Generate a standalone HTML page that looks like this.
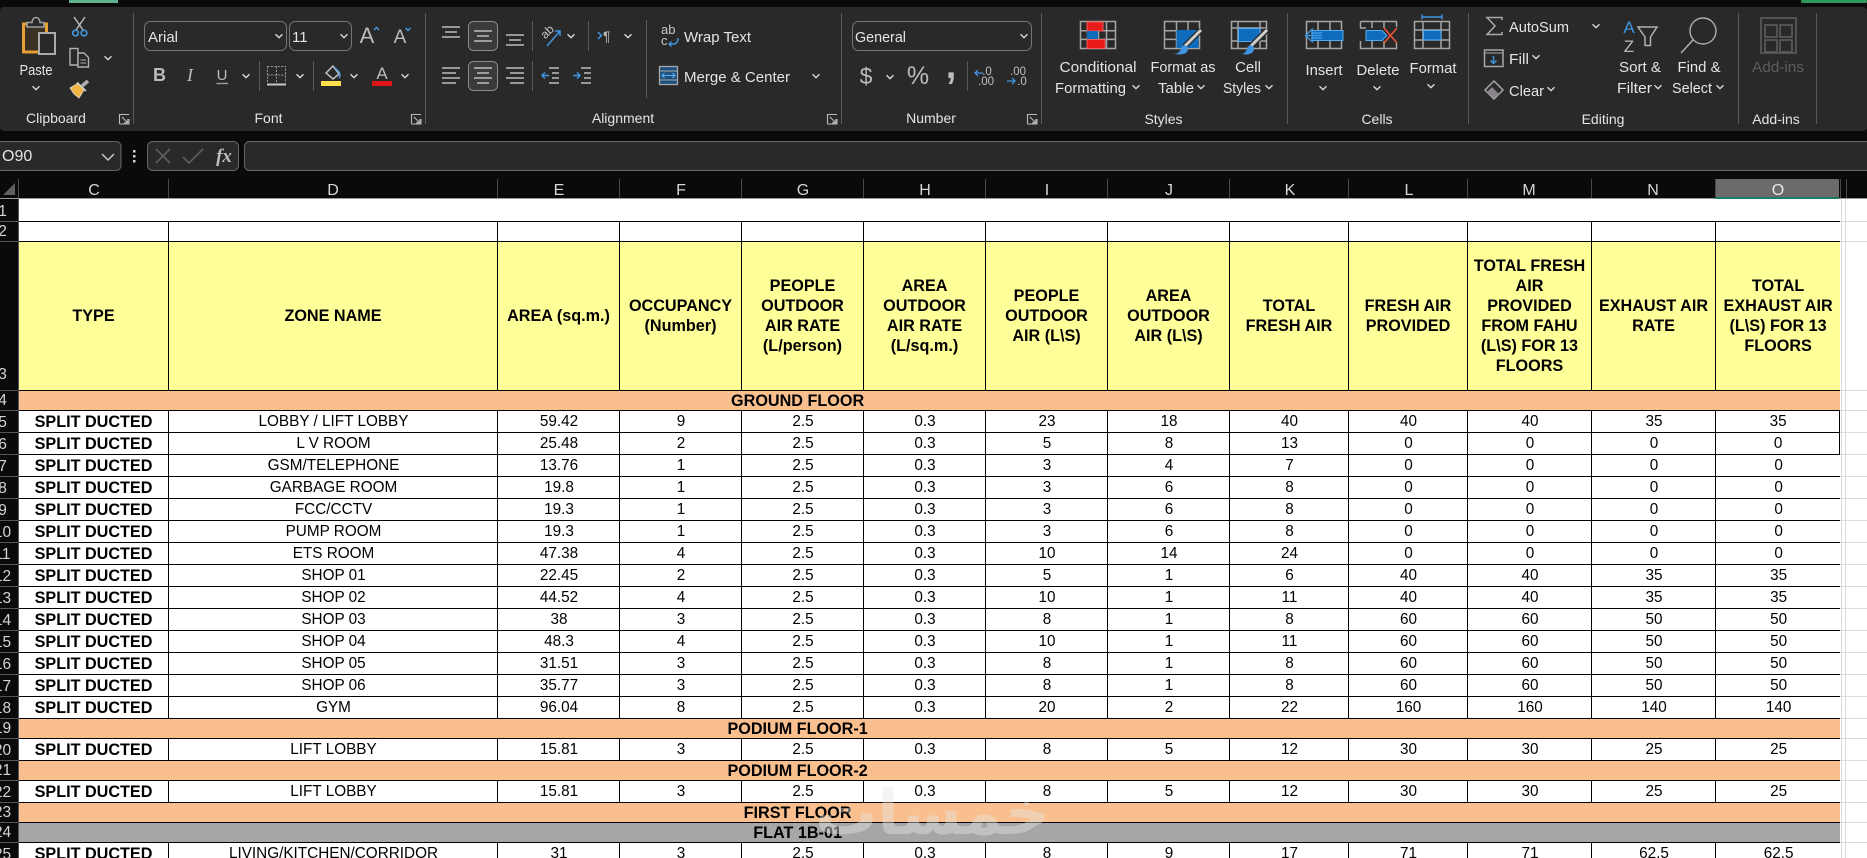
<!DOCTYPE html>
<html><head><meta charset="utf-8"><title>Sheet</title>
<style>
html,body{margin:0;padding:0;width:1867px;height:858px;overflow:hidden;background:#fff}
body{position:relative;font-family:"Liberation Sans",Arial,sans-serif}
#top{position:absolute;left:0;top:0}
#top text{font-family:"Liberation Sans",Arial,sans-serif;fill:#e4e4e4;font-size:15px}
#tb{position:absolute;left:0;top:199px;border-collapse:separate;border-spacing:0;table-layout:fixed;width:1867px;color:#000;font-size:15.3px}
#tb td{box-sizing:border-box;padding:1px 0 0 1px;text-align:center;vertical-align:middle;border-right:1px solid #000;border-bottom:1px solid #000;white-space:nowrap;line-height:20px;overflow:visible}
#tb td.r{padding:0;background:#0a0a0a;color:#d4d4d4;border-right:1px solid #555;border-bottom:1px solid #555;vertical-align:bottom;font-size:15.5px;line-height:18px;overflow:visible}
#tb td.r span{display:inline-block;width:48px;margin-left:-22px;margin-right:-9px;text-align:center}
#tb td.p{border-right:none;border-bottom:1px solid #d9d9d9}
#tb td.o{border-right:none}
#tb tr.y td.h{padding:0;background:#ffff99;font-weight:bold;font-size:16.2px;line-height:20px}
#tb td.t{padding-left:0;font-weight:bold;font-size:16.2px}
#tb td.n{border-right:none}
#tb td.f{background:#f9bf8f;font-weight:bold;font-size:16.2px;line-height:18px;padding:0 264px 0 0;border-right:none}
#tb td.g{background:#a6a6a6;font-weight:bold;font-size:16.2px;line-height:18px;padding:0 264px 0 0;border-right:none}
.vl{position:absolute;top:199px;width:1px;height:659px;background:#d9d9d9}
#wm{position:absolute;left:825px;top:778px;width:225px;height:70px;text-align:center;font-family:"DejaVu Sans",sans-serif;font-weight:bold;font-size:62px;line-height:70px;color:#e6e6e6;opacity:.42;white-space:nowrap}
</style></head><body>
<table id="tb">
<colgroup><col style="width:19px"><col style="width:150px"><col style="width:329px"><col style="width:122px"><col style="width:122px"><col style="width:122px"><col style="width:122px"><col style="width:122px"><col style="width:122px"><col style="width:119px"><col style="width:119px"><col style="width:124px"><col style="width:124px"><col style="width:124px"><col style="width:27px"></colgroup>
<tr style="height:23px"><td class="r"><span>1</span></td><td colspan="13" class="n"></td><td class="p"></td></tr>
<tr style="height:20px"><td class="r"><span>2</span></td><td></td><td></td><td></td><td></td><td></td><td></td><td></td><td></td><td></td><td></td><td></td><td></td><td class="o"></td><td class="p"></td></tr>
<tr class="y" style="height:149px"><td class="r"><span style="padding-bottom:6px">3</span></td><td class="h">TYPE</td><td class="h">ZONE NAME</td><td class="h">AREA (sq.m.)</td><td class="h">OCCUPANCY<br>(Number)</td><td class="h">PEOPLE<br>OUTDOOR<br>AIR RATE<br>(L/person)</td><td class="h">AREA<br>OUTDOOR<br>AIR RATE<br>(L/sq.m.)</td><td class="h">PEOPLE<br>OUTDOOR<br>AIR (L\S)</td><td class="h">AREA<br>OUTDOOR<br>AIR (L\S)</td><td class="h">TOTAL<br>FRESH AIR</td><td class="h">FRESH AIR<br>PROVIDED</td><td class="h">TOTAL FRESH<br>AIR<br>PROVIDED<br>FROM FAHU<br>(L\S) FOR 13<br>FLOORS</td><td class="h">EXHAUST AIR<br>RATE</td><td class="h o">TOTAL<br>EXHAUST AIR<br>(L\S) FOR 13<br>FLOORS</td><td class="p"></td></tr>
<tr style="height:20px"><td class="r"><span>4</span></td><td colspan="13" class="f">GROUND FLOOR</td><td class="p"></td></tr>
<tr style="height:22px"><td class="r"><span>5</span></td><td class="t">SPLIT DUCTED</td><td>LOBBY / LIFT LOBBY</td><td>59.42</td><td>9</td><td>2.5</td><td>0.3</td><td>23</td><td>18</td><td>40</td><td>40</td><td>40</td><td>35</td><td>35</td><td class="p"></td></tr>
<tr style="height:22px"><td class="r"><span>6</span></td><td class="t">SPLIT DUCTED</td><td>L V ROOM</td><td>25.48</td><td>2</td><td>2.5</td><td>0.3</td><td>5</td><td>8</td><td>13</td><td>0</td><td>0</td><td>0</td><td>0</td><td class="p"></td></tr>
<tr style="height:22px"><td class="r"><span>7</span></td><td class="t">SPLIT DUCTED</td><td>GSM/TELEPHONE</td><td>13.76</td><td>1</td><td>2.5</td><td>0.3</td><td>3</td><td>4</td><td>7</td><td>0</td><td>0</td><td>0</td><td class="o">0</td><td class="p"></td></tr>
<tr style="height:22px"><td class="r"><span>8</span></td><td class="t">SPLIT DUCTED</td><td>GARBAGE ROOM</td><td>19.8</td><td>1</td><td>2.5</td><td>0.3</td><td>3</td><td>6</td><td>8</td><td>0</td><td>0</td><td>0</td><td class="o">0</td><td class="p"></td></tr>
<tr style="height:22px"><td class="r"><span>9</span></td><td class="t">SPLIT DUCTED</td><td>FCC/CCTV</td><td>19.3</td><td>1</td><td>2.5</td><td>0.3</td><td>3</td><td>6</td><td>8</td><td>0</td><td>0</td><td>0</td><td class="o">0</td><td class="p"></td></tr>
<tr style="height:22px"><td class="r"><span>10</span></td><td class="t">SPLIT DUCTED</td><td>PUMP ROOM</td><td>19.3</td><td>1</td><td>2.5</td><td>0.3</td><td>3</td><td>6</td><td>8</td><td>0</td><td>0</td><td>0</td><td class="o">0</td><td class="p"></td></tr>
<tr style="height:22px"><td class="r"><span>11</span></td><td class="t">SPLIT DUCTED</td><td>ETS ROOM</td><td>47.38</td><td>4</td><td>2.5</td><td>0.3</td><td>10</td><td>14</td><td>24</td><td>0</td><td>0</td><td>0</td><td class="o">0</td><td class="p"></td></tr>
<tr style="height:22px"><td class="r"><span>12</span></td><td class="t">SPLIT DUCTED</td><td>SHOP 01</td><td>22.45</td><td>2</td><td>2.5</td><td>0.3</td><td>5</td><td>1</td><td>6</td><td>40</td><td>40</td><td>35</td><td class="o">35</td><td class="p"></td></tr>
<tr style="height:22px"><td class="r"><span>13</span></td><td class="t">SPLIT DUCTED</td><td>SHOP 02</td><td>44.52</td><td>4</td><td>2.5</td><td>0.3</td><td>10</td><td>1</td><td>11</td><td>40</td><td>40</td><td>35</td><td class="o">35</td><td class="p"></td></tr>
<tr style="height:22px"><td class="r"><span>14</span></td><td class="t">SPLIT DUCTED</td><td>SHOP 03</td><td>38</td><td>3</td><td>2.5</td><td>0.3</td><td>8</td><td>1</td><td>8</td><td>60</td><td>60</td><td>50</td><td class="o">50</td><td class="p"></td></tr>
<tr style="height:22px"><td class="r"><span>15</span></td><td class="t">SPLIT DUCTED</td><td>SHOP 04</td><td>48.3</td><td>4</td><td>2.5</td><td>0.3</td><td>10</td><td>1</td><td>11</td><td>60</td><td>60</td><td>50</td><td class="o">50</td><td class="p"></td></tr>
<tr style="height:22px"><td class="r"><span>16</span></td><td class="t">SPLIT DUCTED</td><td>SHOP 05</td><td>31.51</td><td>3</td><td>2.5</td><td>0.3</td><td>8</td><td>1</td><td>8</td><td>60</td><td>60</td><td>50</td><td class="o">50</td><td class="p"></td></tr>
<tr style="height:22px"><td class="r"><span>17</span></td><td class="t">SPLIT DUCTED</td><td>SHOP 06</td><td>35.77</td><td>3</td><td>2.5</td><td>0.3</td><td>8</td><td>1</td><td>8</td><td>60</td><td>60</td><td>50</td><td class="o">50</td><td class="p"></td></tr>
<tr style="height:22px"><td class="r"><span>18</span></td><td class="t">SPLIT DUCTED</td><td>GYM</td><td>96.04</td><td>8</td><td>2.5</td><td>0.3</td><td>20</td><td>2</td><td>22</td><td>160</td><td>160</td><td>140</td><td class="o">140</td><td class="p"></td></tr>
<tr style="height:20px"><td class="r"><span>19</span></td><td colspan="13" class="f">PODIUM FLOOR-1</td><td class="p"></td></tr>
<tr style="height:22px"><td class="r"><span>20</span></td><td class="t">SPLIT DUCTED</td><td>LIFT LOBBY</td><td>15.81</td><td>3</td><td>2.5</td><td>0.3</td><td>8</td><td>5</td><td>12</td><td>30</td><td>30</td><td>25</td><td class="o">25</td><td class="p"></td></tr>
<tr style="height:20px"><td class="r"><span>21</span></td><td colspan="13" class="f">PODIUM FLOOR-2</td><td class="p"></td></tr>
<tr style="height:22px"><td class="r"><span>22</span></td><td class="t">SPLIT DUCTED</td><td>LIFT LOBBY</td><td>15.81</td><td>3</td><td>2.5</td><td>0.3</td><td>8</td><td>5</td><td>12</td><td>30</td><td>30</td><td>25</td><td class="o">25</td><td class="p"></td></tr>
<tr style="height:20px"><td class="r"><span>23</span></td><td colspan="13" class="f">FIRST FLOOR</td><td class="p"></td></tr>
<tr style="height:20px"><td class="r"><span>24</span></td><td colspan="13" class="g">FLAT 1B-01</td><td class="p"></td></tr>
<tr style="height:22px"><td class="r"><span>25</span></td><td class="t">SPLIT DUCTED</td><td>LIVING/KITCHEN/CORRIDOR</td><td>31</td><td>3</td><td>2.5</td><td>0.3</td><td>8</td><td>9</td><td>17</td><td>71</td><td>71</td><td>62.5</td><td class="o">62.5</td><td class="p"></td></tr>
</table>
<div class="vl" style="left:1841px"></div><div class="vl" style="left:1845px"></div>
<div id="wm" dir="rtl">خمسات</div>

<svg id="top" width="1867" height="199" viewBox="0 0 1867 199" xmlns="http://www.w3.org/2000/svg">
<defs>
<path id="ch" d="M-3.5-1.8L0 1.6L3.5-1.8" fill="none" stroke="#d8d8d8" stroke-width="1.4"/>
<g id="ln" fill="none" stroke="#bdbdbd" stroke-width="1.1"><path d="M-4.5 5V-4.5H5"/><path d="M-4.5 5H5V0"/><path d="M-2-2L3.5 3.5M3.8 0V3.8H0"/></g>
</defs>
<rect width="1867" height="199" fill="#0a0a0a"/>
<rect x="69" y="0" width="49" height="3" fill="#5eb08e"/>
<rect x="1801" y="0" width="66" height="3" rx="1" fill="#2e9a5a"/>
<rect x="0" y="7" width="1867" height="124" rx="4" fill="#292929"/>
<g stroke="#5a5a5a" stroke-width="1"><path d="M133.5 13V124M425.5 13V124M841.5 13V124M1041.5 13V124M1287.5 13V124M1468.5 13V124M1738.5 13V124M1816.5 13V124"/><path d="M259.5 61V91M313.5 61V91M532.5 21V51M532.5 61V91M588.5 21V51M646.5 20V98M967.5 61V91"/></g>

<!-- Clipboard -->
<rect x="23.5" y="24" width="23" height="28" fill="#3a3024" stroke="#e8a034" stroke-width="3"/>
<path d="M27 27V22.5H32Q32.5 17.5 36 17.5T40 22.5H44V27Z" fill="#292929" stroke="#a0a0a0" stroke-width="1.6"/>
<rect x="39" y="33" width="16" height="21" fill="#292929" stroke="#ababab" stroke-width="2"/>
<text x="36" y="75" text-anchor="middle" textLength="33" lengthAdjust="spacingAndGlyphs">Paste</text><use href="#ch" x="36" y="88"/>
<g fill="none"><path d="M74 17L83 30M85 17L76 30" stroke="#b8b8b8" stroke-width="1.5"/><circle cx="75.5" cy="33" r="2.8" stroke="#3f95e0" stroke-width="1.7"/><circle cx="84" cy="33" r="2.8" stroke="#3f95e0" stroke-width="1.7"/></g>
<path d="M70 48.5H78V65H70Z" fill="none" stroke="#b0b0b0" stroke-width="1.4"/>
<path d="M78 53H84L88.5 57.5V67H78Z" fill="#292929" stroke="#b0b0b0" stroke-width="1.4"/><path d="M80.5 60H86M80.5 63H86" stroke="#b0b0b0"/>
<use href="#ch" x="108" y="58"/>
<path d="M70 88L78 83L84 90L79 98L74 94Z" fill="#f0b440" stroke="#d8d8d8" stroke-width=".8"/><path d="M82 86L88 81" stroke="#b0b0b0" stroke-width="3.6"/><path d="M77 82.500L86 91" stroke="#d0d0d0" stroke-width="1.6"/>
<text x="56" y="123" text-anchor="middle" font-size="14" style="font-size:14px">Clipboard</text><use href="#ln" x="124" y="119"/>

<!-- Font -->
<g fill="#292929" stroke="#757575"><rect x="144.5" y="21.5" width="142" height="29" rx="6"/><rect x="289.5" y="21.5" width="62" height="29" rx="6"/></g>
<text x="148" y="42" textLength="30" lengthAdjust="spacingAndGlyphs">Arial</text><text x="292" y="42">11</text>
<use href="#ch" x="279" y="36"/><use href="#ch" x="344" y="36"/>
<text x="367" y="43" text-anchor="middle" style="font-size:22px;fill:#bcbcbc">A</text><path d="M374 30L376.500 27.500L379 30" fill="none" stroke="#4a9be0" stroke-width="1.4"/>
<text x="400" y="43" text-anchor="middle" style="font-size:19px;fill:#bcbcbc">A</text><path d="M405.500 28L408 30.500L410.500 28" fill="none" stroke="#4a9be0" stroke-width="1.4"/>
<text x="159.500" y="81" text-anchor="middle" style="font-size:18px;font-weight:bold;fill:#bcbcbc">B</text>
<text x="190" y="81" text-anchor="middle" style="font-size:18px;font-style:italic;font-family:'Liberation Serif',serif;fill:#bcbcbc">I</text>
<text x="222" y="80" text-anchor="middle" style="font-size:15px;fill:#bcbcbc">U</text><path d="M216.500 83.500H228" stroke="#a0a0a0" stroke-width="1.400"/>
<use href="#ch" x="246" y="76"/>
<path d="M267.500 66.500H285.500V83M267.500 66.500V83M276.500 66.500V83M267.500 75H285.500" fill="none" stroke="#9a9a9a" stroke-dasharray="2 1.400"/><path d="M267 84.500H286" stroke="#c8c8c8" stroke-width="2"/>
<use href="#ch" x="300" y="76"/>
<path d="M326 73L333 66L339 74L333 79Z" fill="none" stroke="#c0c0c0" stroke-width="1.500"/><path d="M335 68L339 72Q341 76 339 78" stroke="#5aa0e0" fill="none" stroke-width="1.500"/>
<rect x="321" y="81" width="20" height="5" fill="#ffdf4a"/><use href="#ch" x="354" y="76"/>
<text x="382" y="79" text-anchor="middle" style="font-size:17px;fill:#bcbcbc">A</text><rect x="372" y="81" width="20" height="5" fill="#e01515"/><use href="#ch" x="405" y="76"/>
<text x="268.500" y="123" text-anchor="middle" style="font-size:14px">Font</text><use href="#ln" x="416" y="119"/>

<!-- Alignment -->
<rect x="468.500" y="21.500" width="29" height="29" rx="5" fill="#3a3a3a" stroke="#8a8a8a"/>
<rect x="468.500" y="61.500" width="29" height="29" rx="5" fill="#3a3a3a" stroke="#8a8a8a"/>
<g stroke="#bcbcbc" stroke-width="1.500" fill="none">
<path d="M442 27H460M445 32H457M442 37H460"/><path d="M474 31H492M477 36H489M474 41H492"/><path d="M506 35H524M509 40H521M506 45H524"/>
<path d="M442 68H460M442 73H456M442 78H460M442 83H456"/><path d="M474 68H492M477 73H489M474 78H492M477 83H489"/><path d="M506 68H524M510 73H524M506 78H524M510 83H524"/>
<path d="M549 68H559M552 73H559M552 78H559M549 83H559"/><path d="M581 68H591M584 73H591M584 78H591M581 83H591" />
</g>
<g stroke="#3f95e0" stroke-width="1.500" fill="none">
<path d="M549 75.500H542M545 72.500L542 75.500L545 78.500"/><path d="M573 75.500H580M577 72.500L580 75.500L577 78.500"/>
<path d="M547 46L560 31M555 31H560V36"/><path d="M598 32L601.500 35.500L598 39"/>
</g>
<text x="541" y="37" style="font-size:12px;fill:#c8c8c8" transform="rotate(-45 546 33)">ab</text>
<text x="603" y="41" style="font-size:14px;fill:#bcbcbc">¶</text>
<use href="#ch" x="571" y="36"/><use href="#ch" x="628" y="36"/>
<text x="661" y="34" style="font-size:13px;fill:#c8c8c8">ab</text><text x="661" y="45" style="font-size:13px;fill:#c8c8c8">c</text><path d="M678 38Q678 44 673 44H669M671.500 41.500L669 44L671.500 46.500" fill="none" stroke="#3f95e0" stroke-width="1.400"/>
<text x="684" y="42" textLength="67" lengthAdjust="spacingAndGlyphs">Wrap Text</text>
<rect x="659.500" y="66.500" width="18" height="18" fill="#1b4f7d" stroke="#a8a8a8" stroke-width="1.300"/><path d="M659.500 71H677.500M659.500 80H677.500" stroke="#a8a8a8"/><path d="M662 75.500H675M664.500 73L662 75.500L664.500 78M672.500 73L675 75.500L672.500 78" fill="none" stroke="#63b0f0" stroke-width="1.100"/>
<text x="684" y="82" textLength="106" lengthAdjust="spacingAndGlyphs">Merge &amp; Center</text><use href="#ch" x="816" y="76"/>
<text x="623" y="123" text-anchor="middle" style="font-size:14px">Alignment</text><use href="#ln" x="832" y="119"/>

<!-- Number -->
<rect x="852.500" y="21.500" width="179" height="29" rx="6" fill="#292929" stroke="#757575"/>
<text x="855" y="42" textLength="51" lengthAdjust="spacingAndGlyphs">General</text><use href="#ch" x="1024" y="36"/>
<text x="866" y="84" text-anchor="middle" style="font-size:23px;fill:#bcbcbc">$</text><use href="#ch" x="890" y="77"/>
<text x="918" y="84" text-anchor="middle" style="font-size:25px;fill:#bcbcbc">%</text>
<text x="951" y="78" text-anchor="middle" style="font-size:38px;font-weight:bold;fill:#bcbcbc">,</text>
<text x="987" y="75" style="font-size:11.500px;fill:#c0c0c0" text-anchor="middle">.0</text><text x="986" y="85" style="font-size:11.500px;fill:#c0c0c0" text-anchor="middle">.00</text>
<path d="M975 73H983M978 70L975 73L978 76" fill="none" stroke="#3f95e0" stroke-width="1.300"/>
<text x="1018" y="75" style="font-size:11.500px;fill:#c0c0c0" text-anchor="middle">.00</text><text x="1022" y="85" style="font-size:11.500px;fill:#c0c0c0" text-anchor="middle">.0</text>
<path d="M1007 81H1015M1012 78L1015 81L1012 84" fill="none" stroke="#3f95e0" stroke-width="1.300"/>
<text x="931" y="123" text-anchor="middle" style="font-size:14px">Number</text><use href="#ln" x="1032" y="119"/>

<!-- Styles -->
<g fill="none" stroke="#a5a5a5" stroke-width="1.500">
<path d="M1080.500 21.500H1115.500V48.500H1080.500ZM1080.500 30.700H1115.500M1080.500 39.400H1115.500M1087.500 21.500V48.500M1098.500 21.500V48.500M1106.500 21.500V48.500"/>
<path d="M1164.500 21.500H1199.500V48.500H1164.500ZM1164.500 30.700H1199.500M1164.500 39.400H1199.500M1176.500 21.500V48.500M1188 21.500V48.500"/>
<path d="M1231.500 21.500H1266.500V48.500H1231.500ZM1231.500 28H1266.500M1231.500 41H1266.500M1238 21.500V48.500M1260 21.500V48.500"/>
</g>
<rect x="1087" y="22" width="16" height="9" fill="#e81a1a" stroke="#f25d5d"/><rect x="1087" y="31" width="11" height="8" fill="#0f6cbd"/><rect x="1087" y="39.500" width="18" height="9" fill="#e81a1a" stroke="#f25d5d"/>
<rect x="1176.500" y="30" width="22" height="18" fill="#0f6cbd"/><path d="M1184 47L1201 30" stroke="#292929" stroke-width="5.500"/><path d="M1184 47L1201 30" stroke="#cfcfcf" stroke-width="3"/><path d="M1173 54Q1180 54 1181 48Q1184 43 1188 47Q1189 54 1180 54.500Z" fill="#3f95e0"/>
<rect x="1238.500" y="28.500" width="21.500" height="13" fill="#0f6cbd" stroke="#55aaf0"/><path d="M1250 47L1267 30" stroke="#292929" stroke-width="5.500"/><path d="M1250 47L1267 30" stroke="#cfcfcf" stroke-width="3"/><path d="M1241 54Q1246 54 1247 48Q1250 43 1254 47Q1255 54 1246 54.500Z" fill="#3f95e0"/>
<text x="1098" y="72" text-anchor="middle" textLength="77" lengthAdjust="spacingAndGlyphs">Conditional</text>
<text x="1055" y="93" textLength="71" lengthAdjust="spacingAndGlyphs">Formatting</text><use href="#ch" x="1136" y="87"/>
<text x="1183" y="72" text-anchor="middle" textLength="65" lengthAdjust="spacingAndGlyphs">Format as</text>
<text x="1158" y="93" textLength="36" lengthAdjust="spacingAndGlyphs">Table</text><use href="#ch" x="1201" y="87"/>
<text x="1248" y="72" text-anchor="middle">Cell</text>
<text x="1223" y="93" textLength="38" lengthAdjust="spacingAndGlyphs">Styles</text><use href="#ch" x="1269" y="87"/>
<text x="1163.500" y="124" text-anchor="middle" style="font-size:14px">Styles</text>

<!-- Cells -->
<g fill="none" stroke="#a5a5a5" stroke-width="1.500">
<path d="M1306.500 21.500H1341.500V48.500H1306.500ZM1318 21.500V48.500M1330 21.500V48.500"/>
<path d="M1360.500 21.500H1396.500V27M1360.500 21.500V28H1366M1360.500 41V48.500H1396.500V43M1372 21.500V28M1384 21.500V28M1372 41V48.500M1384 41V48.500"/>
<path d="M1414.500 21.500H1449.500V48.500H1414.500ZM1414.500 30H1449.500M1414.500 40H1449.500M1423 21.500V48.500M1441 21.500V48.500"/>
</g>
<rect x="1312" y="30.500" width="31" height="10" fill="#0f6cbd" stroke="#55aaf0"/>
<path d="M1322 35.500H1306M1313 28.500L1305.500 35.500L1313 42.500M1322 33H1311M1322 38H1311" fill="none" stroke="#3f95e0" stroke-width="1.400"/>
<path d="M1366 30.500H1382L1387 35.500L1382 40.500H1366Z" fill="#0f6cbd" stroke="#55aaf0"/>
<path d="M1384 28L1397 43M1397 28L1384 43" stroke="#f0553c" stroke-width="1.500"/>
<rect x="1423.500" y="30.500" width="17.500" height="9.500" fill="#0f6cbd" stroke="#55aaf0"/>
<path d="M1422 17H1442M1422 14.500V19.500M1442 14.500V19.500" stroke="#3f95e0" stroke-width="1.400" fill="none"/>
<text x="1324" y="75" text-anchor="middle" textLength="37" lengthAdjust="spacingAndGlyphs">Insert</text><use href="#ch" x="1323" y="88"/>
<text x="1378" y="75" text-anchor="middle" textLength="43" lengthAdjust="spacingAndGlyphs">Delete</text><use href="#ch" x="1377" y="88"/>
<text x="1433" y="73" text-anchor="middle" textLength="47" lengthAdjust="spacingAndGlyphs">Format</text><use href="#ch" x="1431" y="86"/>
<text x="1377" y="124" text-anchor="middle" style="font-size:14px">Cells</text>

<!-- Editing -->
<path d="M1502 20V17.500H1487L1495 26L1487 34.500H1502V32" fill="none" stroke="#a8a8a8" stroke-width="1.500"/>
<text x="1509" y="32" textLength="60" lengthAdjust="spacingAndGlyphs">AutoSum</text><use href="#ch" x="1596" y="26"/>
<rect x="1484.500" y="50" width="18.500" height="16.500" fill="none" stroke="#a8a8a8" stroke-width="1.500"/><path d="M1484.500 53H1503" stroke="#a8a8a8"/><path d="M1493.500 56V63M1490.500 60.500L1493.500 63.500L1496.500 60.500" fill="none" stroke="#3f95e0" stroke-width="1.500"/>
<text x="1509" y="64" textLength="20" lengthAdjust="spacingAndGlyphs">Fill</text><use href="#ch" x="1536" y="57"/>
<path d="M1485 90L1494 81L1503 90L1494 99Z" fill="none" stroke="#a8a8a8" stroke-width="1.500"/><path d="M1487 92L1492 87L1499 94L1494 98Z" fill="#8a8288"/>
<text x="1509" y="96" textLength="35" lengthAdjust="spacingAndGlyphs">Clear</text><use href="#ch" x="1551" y="89"/>
<text x="1629" y="33" text-anchor="middle" style="font-size:17px;fill:#3f95e0">A</text><text x="1629" y="52" text-anchor="middle" style="font-size:17px;fill:#b8b8b8">Z</text>
<path d="M1638 27H1657L1650.500 37V45.500H1645V37Z" fill="none" stroke="#b0b0b0" stroke-width="1.500"/>
<circle cx="1703" cy="31" r="13" fill="none" stroke="#b0b0b0" stroke-width="1.400"/><path d="M1693 40L1681 53" stroke="#b0b0b0" stroke-width="1.500"/>
<text x="1640" y="72" text-anchor="middle" textLength="42" lengthAdjust="spacingAndGlyphs">Sort &amp;</text>
<text x="1617" y="93" textLength="35" lengthAdjust="spacingAndGlyphs">Filter</text><use href="#ch" x="1658" y="87"/>
<text x="1699" y="72" text-anchor="middle" textLength="43" lengthAdjust="spacingAndGlyphs">Find &amp;</text>
<text x="1672" y="93" textLength="40" lengthAdjust="spacingAndGlyphs">Select</text><use href="#ch" x="1720" y="87"/>
<text x="1603" y="124" text-anchor="middle" style="font-size:14px">Editing</text>

<!-- Add-ins -->
<g fill="none" stroke="#5c5c5c" stroke-width="1.600"><rect x="1761" y="18" width="35" height="35"/><rect x="1765" y="25" width="12" height="12"/><rect x="1780" y="25" width="12" height="12"/><rect x="1765" y="40" width="12" height="12"/><rect x="1780" y="40" width="12" height="12"/></g>
<text x="1778" y="72" text-anchor="middle" textLength="52" lengthAdjust="spacingAndGlyphs" style="fill:#5e5e5e">Add-ins</text>
<text x="1776" y="124" text-anchor="middle" style="font-size:14px">Add-ins</text>

<!-- Formula bar -->
<g fill="#292929" stroke="#666"><rect x="-6" y="141.500" width="127" height="29" rx="5"/><rect x="147.500" y="141.500" width="91" height="29" rx="5"/><rect x="244.500" y="141.500" width="1640" height="29" rx="5"/></g>
<text x="2" y="161" style="font-size:16px">O90</text>
<path d="M102 154L108 160L114 154" fill="none" stroke="#c8c8c8" stroke-width="1.500"/>
<g fill="#d0d0d0"><rect x="133" y="150" width="2.500" height="2.500"/><rect x="133" y="155" width="2.500" height="2.500"/><rect x="133" y="160" width="2.500" height="2.500"/></g>
<path d="M156 149L170 163M170 149L156 163" stroke="#5e5e5e" stroke-width="1.600"/>
<path d="M183 157L189 163L203 149" fill="none" stroke="#5e5e5e" stroke-width="1.600"/>
<text x="224" y="162" text-anchor="middle" style="font-family:'Liberation Serif',serif;font-style:italic;font-size:19px;font-weight:bold;fill:#bdbdbd">fx</text>

<!-- Column headers -->
<rect x="0" y="198" width="1867" height="1" fill="#9a9a9a"/>
<path d="M3 195H15V183Z" fill="#5f5f5f"/>
<rect x="1715" y="179" width="124" height="19" fill="#6b6b6b"/>
<rect x="1715" y="197" width="124" height="2" fill="#1c7c66"/>
<g stroke="#4a4a4a"><path d="M18.500 179V198M168.500 179V198M497.500 179V198M619.500 179V198M741.500 179V198M863.500 179V198M985.500 179V198M1107.500 179V198M1229.500 179V198M1348.500 179V198M1467.500 179V198M1591.500 179V198M1715.500 179V198M1840.500 179V198M1846.500 179V198"/></g>
<g text-anchor="middle" style="font-size:16px">
<text x="94" y="195" style="fill:#d6d6d6;font-size:16px">C</text><text x="333" y="195" style="fill:#d6d6d6;font-size:16px">D</text><text x="559" y="195" style="fill:#d6d6d6;font-size:16px">E</text><text x="681" y="195" style="fill:#d6d6d6;font-size:16px">F</text><text x="803" y="195" style="fill:#d6d6d6;font-size:16px">G</text><text x="925" y="195" style="fill:#d6d6d6;font-size:16px">H</text><text x="1047" y="195" style="fill:#d6d6d6;font-size:16px">I</text><text x="1169" y="195" style="fill:#d6d6d6;font-size:16px">J</text><text x="1290" y="195" style="fill:#d6d6d6;font-size:16px">K</text><text x="1409" y="195" style="fill:#d6d6d6;font-size:16px">L</text><text x="1529" y="195" style="fill:#d6d6d6;font-size:16px">M</text><text x="1653" y="195" style="fill:#d6d6d6;font-size:16px">N</text><text x="1778" y="195" style="fill:#e8e8e8;font-size:16px">O</text>
</g>
</svg>
</body></html>
